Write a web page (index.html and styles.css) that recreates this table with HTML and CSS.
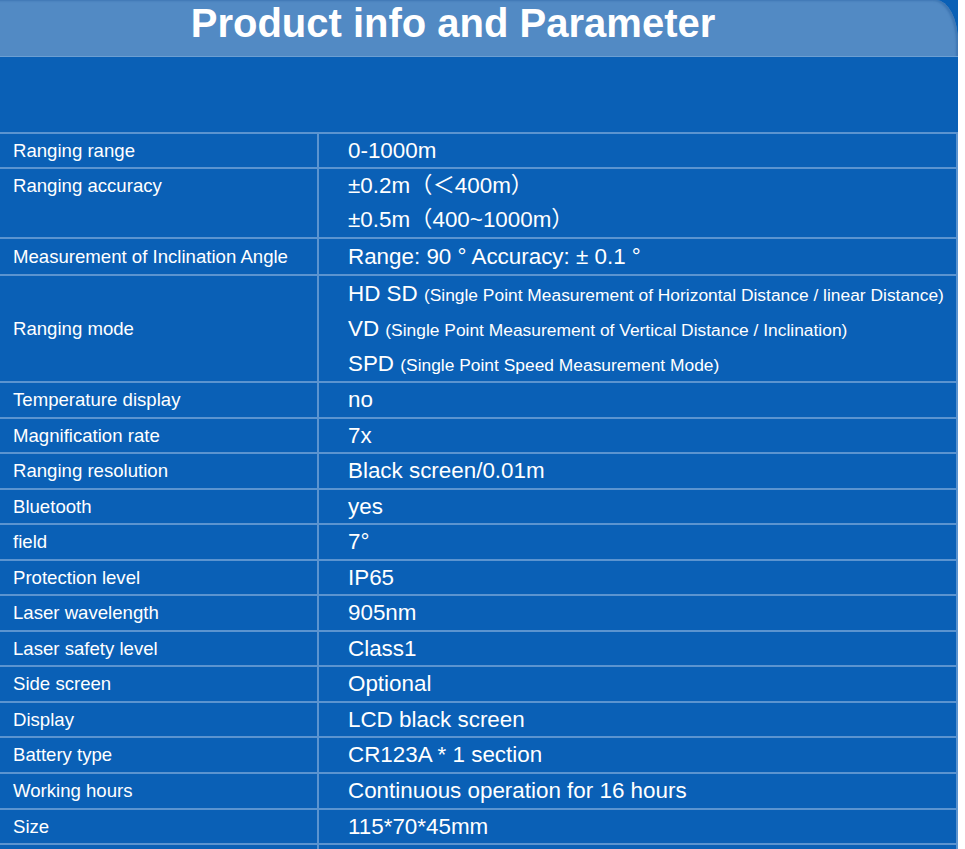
FILE: index.html
```html
<!DOCTYPE html>
<html lang="en">
<head>
<meta charset="utf-8">
<title>Product info and Parameter</title>
<link rel="stylesheet" href="styles.css">
</head>
<body>
<div class="panel">
  <div class="head"><h1 class="title">Product info and Parameter</h1></div>
  <div class="spacer"></div>
  <table class="spec">
    <tbody>
      <tr class="r33"><td class="k">Ranging range</td><td class="v">0-1000m</td></tr>
      <tr class="r34"><td class="k">Ranging accuracy<br>&nbsp;</td><td class="v">±0.2m（＜400m）<br>±0.5m（400~1000m）</td></tr>
      <tr class="r35"><td class="k">Measurement of Inclination Angle</td><td class="v">Range: 90 ° Accuracy: ± 0.1 °</td></tr>
      <tr class="r35"><td class="k">Ranging mode</td><td class="v">HD SD <span class="sm">(Single Point Measurement of Horizontal Distance / linear Distance)</span><br>VD <span class="sm">(Single Point Measurement of Vertical Distance / Inclination)</span><br>SPD <span class="sm">(Single Point Speed Measurement Mode)</span></td></tr>
      <tr><td class="k">Temperature display</td><td class="v">no</td></tr>
      <tr><td class="k">Magnification rate</td><td class="v">7x</td></tr>
      <tr><td class="k">Ranging resolution</td><td class="v">Black screen/0.01m</td></tr>
      <tr><td class="k">Bluetooth</td><td class="v">yes</td></tr>
      <tr><td class="k">field</td><td class="v">7°</td></tr>
      <tr><td class="k">Protection level</td><td class="v">IP65</td></tr>
      <tr><td class="k">Laser wavelength</td><td class="v">905nm</td></tr>
      <tr><td class="k">Laser safety level</td><td class="v">Class1</td></tr>
      <tr><td class="k">Side screen</td><td class="v">Optional</td></tr>
      <tr><td class="k">Display</td><td class="v">LCD black screen</td></tr>
      <tr><td class="k">Battery type</td><td class="v">CR123A * 1 section</td></tr>
      <tr><td class="k">Working hours</td><td class="v">Continuous operation for 16 hours</td></tr>
      <tr><td class="k">Size</td><td class="v">115*70*45mm</td></tr>
      <tr><td class="k">&nbsp;</td><td class="v">&nbsp;</td></tr>
    </tbody>
  </table>
</div>
</body>
</html>
```
FILE: styles.css
```css
html, body {
  margin: 0;
  padding: 0;
  background: #ffffff;
}
body {
  font-family: "Liberation Sans", Arial, "Noto Sans CJK SC", sans-serif;
  color: #ffffff;
  overflow: hidden;
}
.panel {
  width: 958px;
  background: #0a60b6;
}
.head {
  height: 56px;
  background: #528ac4;
  border-bottom: 1px solid #6c9fd3;
  border-top-right-radius: 22px 42px;
  box-shadow: inset -3px 2px 2px -1px #3f77b4;
  padding-right: 52px;
}
.title {
  margin: 0;
  font-size: 40px;
  font-weight: bold;
  line-height: 47px;
  text-align: center;
  color: #ffffff;
}
.spacer {
  height: 75px;
}
.spec {
  width: 958px;
  border-collapse: separate;
  border-spacing: 0;
}
.spec td {
  border-top: 2px solid #5b94d0;
  padding: 0;
  line-height: 33.55px;
  vertical-align: middle;
  white-space: nowrap;
}
.spec .r33 td { line-height: 33px; }
.spec .r34 td { line-height: 34px; }
.spec .r35 td { line-height: 35px; }
.k {
  width: 304px;
  padding-left: 13px !important;
  border-right: 2px solid #5b94d0;
  font-size: 18.6px;
}
.v {
  padding-left: 29px !important;
  font-size: 22.4px;
  border-right: 2px solid #5b94d0;
}
.sm {
  font-size: 17.4px;
  line-height: 1;
}
```
